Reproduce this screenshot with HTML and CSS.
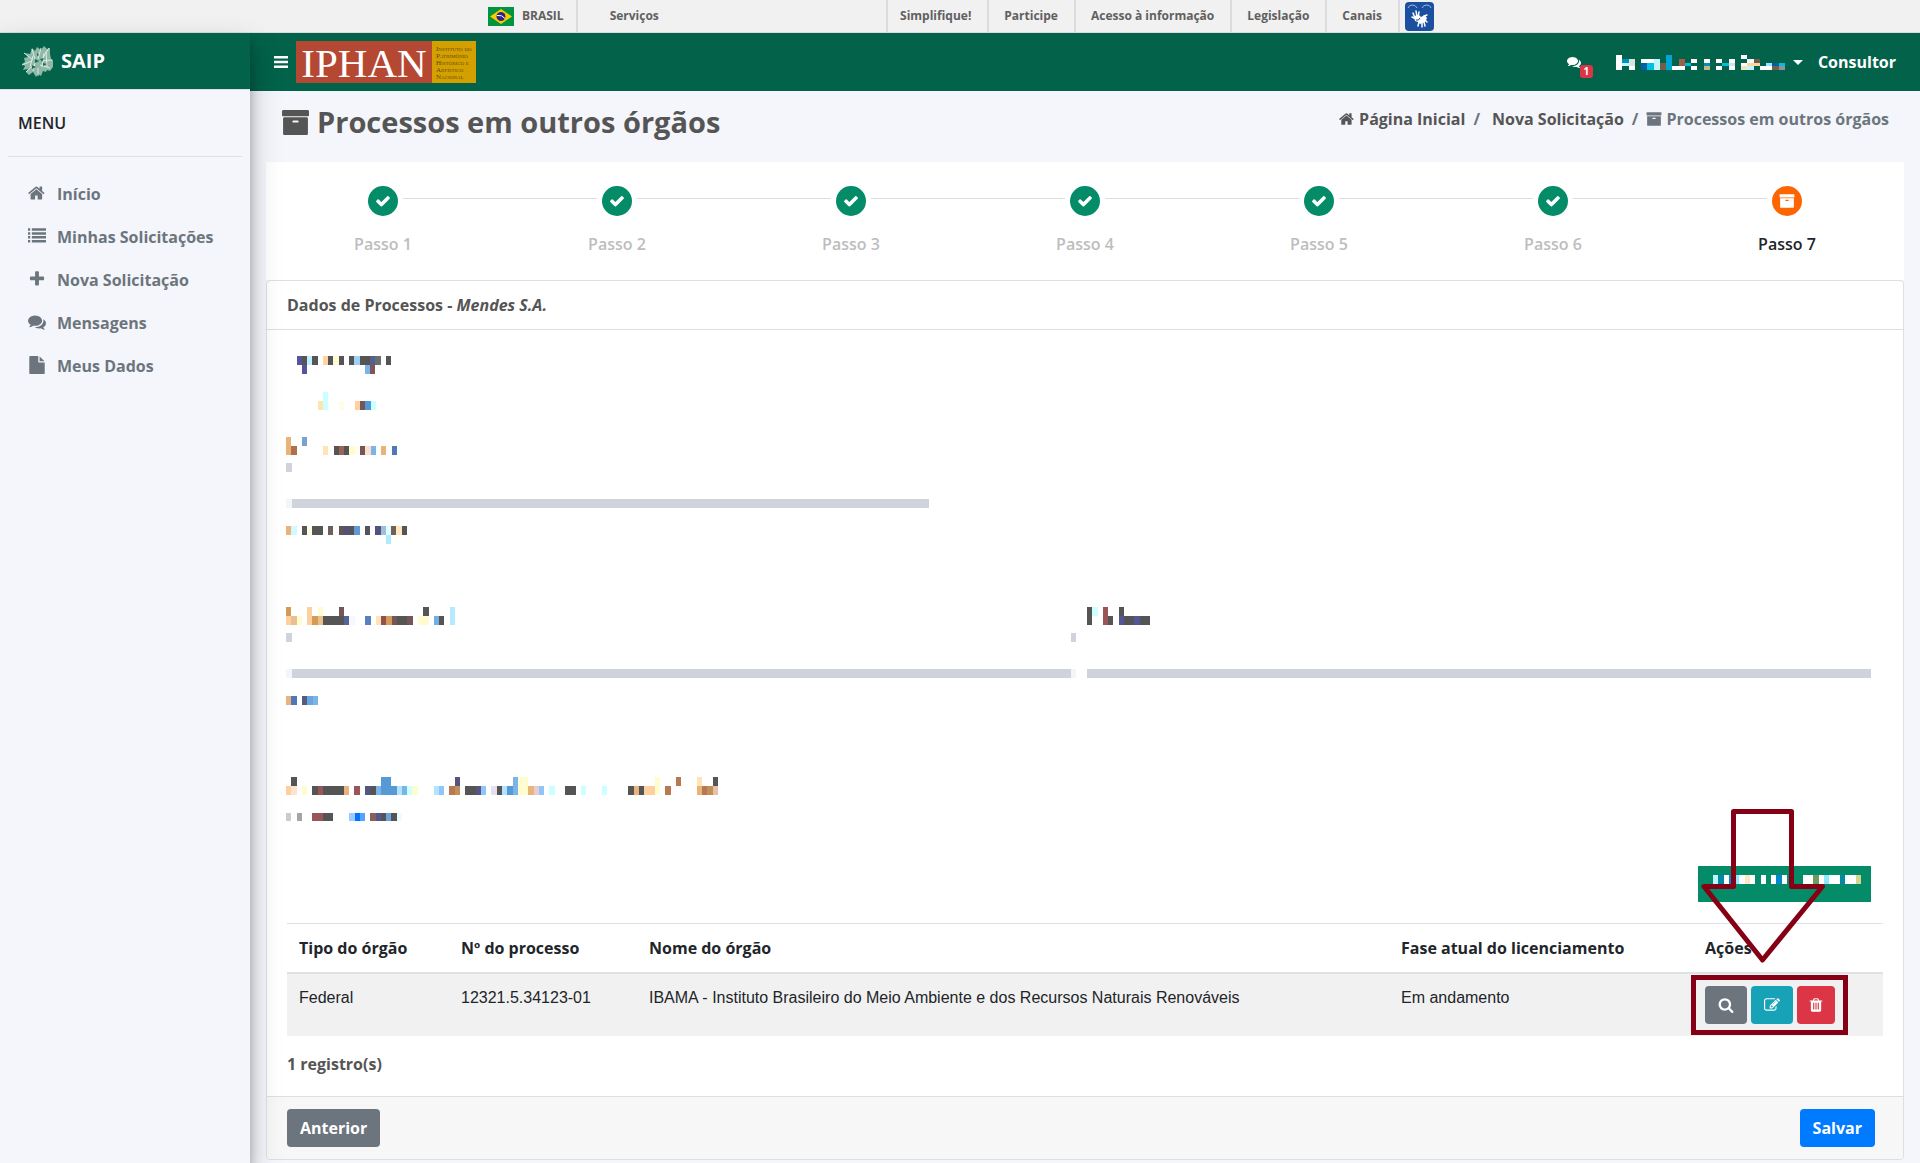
FILE: index.html
```html
<!DOCTYPE html>
<html lang="pt-BR">
<head>
<meta charset="utf-8">
<meta name="viewport" content="width=device-width, initial-scale=1">
<title>SAIP - Processos em outros órgãos</title>
<link rel="stylesheet" href="styles.css">
</head>
<body>
<svg class="sprite" aria-hidden="true">
  <symbol id="home" viewBox="0 0 1792 1792"><path d="M1408 992v480q0 26-19 45t-45 19h-384v-384h-256v384h-384q-26 0-45-19t-19-45v-480q0-1 .5-3t.5-3l575-474 575 474q1 2 1 6zm223-69l-62 74q-8 9-21 11h-3q-13 0-21-7l-692-577-692 577q-12 8-24 7-13-2-21-11l-62-74q-8-10-7-23.500t11-21.500l719-599q32-26 76-26t76 26l244 204v-195q0-14 9-23t23-9h192q14 0 23 9t9 23v408l219 182q10 8 11 21.500t-7 23.500z"/></symbol>
  <symbol id="list" viewBox="0 0 1792 1792"><path d="M0 130h220v250H0zM384 130h1408v250H384zM0 514h220v250H0zM384 514h1408v250H384zM0 898h220v250H0zM384 898h1408v250H384zM0 1282h220v250H0zM384 1282h1408v250H384z"/></symbol>
  <symbol id="plus" viewBox="0 0 1792 1792"><path d="M1600 736v192q0 40-28 68t-68 28h-416v416q0 40-28 68t-68 28h-192q-40 0-68-28t-28-68v-416h-416q-40 0-68-28t-28-68v-192q0-40 28-68t68-28h416v-416q0-40 28-68t68-28h192q40 0 68 28t28 68v416h416q40 0 68 28t28 68z"/></symbol>
  <symbol id="comments" viewBox="0 0 1792 1792"><path d="M1408 768q0 139-94 257t-256.500 186.500-353.500 68.500q-86 0-176-16-124 88-278 128-36 9-86 16h-3q-11 0-20.500-8t-11.500-21q-1-3-1-6.500t.5-6.500 2-6l2.500-5 3.500-5.500 4-5 4.500-5 4-4.500q5-6 23-25t26-29.500 22.500-29 25-38.500 20.500-44q-124-72-195-177t-71-224q0-139 94-257t256.500-186.500 353.500-68.500 353.500 68.500 256.500 186.500 94 257zm384 256q0 120-71 224.500t-195 176.500q10 24 20.500 44t25 38.500 22.500 29 26 29.500 23 25q1 1 4 4.500t4.500 5 4 5 3.500 5.500l2.500 5 2 6 .5 6.500-1 6.500q-3 14-13 22t-22 7q-50-7-86-16-154-40-278-128-90 16-176 16-271 0-472-132 58 4 88 4 161 0 309-45t264-129q125-92 192-212t67-254q0-77-23-152 129 71 204 178t75 230z"/></symbol>
  <symbol id="file" viewBox="0 0 1792 1792"><path d="M1152 512v-472q22 14 36 28l408 408q14 14 28 36h-472zm-128 32q0 40 28 68t68 28h544v1056q0 40-28 68t-68 28h-1344q-40 0-68-28t-28-68v-1600q0-40 28-68t68-28h800v544z"/></symbol>
  <symbol id="archive" viewBox="0 0 1792 1792"><path d="M1088 832q0-26-19-45t-45-19h-256q-26 0-45 19t-19 45 19 45 45 19h256q26 0 45-19t19-45zm576-192v960q0 26-19 45t-45 19h-1408q-26 0-45-19t-19-45v-960q0-26 19-45t45-19h1408q26 0 45 19t19 45zm64-448v256q0 26-19 45t-45 19h-1536q-26 0-45-19t-19-45v-256q0-26 19-45t45-19h1536q26 0 45 19t19 45z"/></symbol>
  <symbol id="check" viewBox="0 0 1792 1792"><path d="M1671 566q0 40-28 68l-724 724-136 136q-28 28-68 28t-68-28l-136-136-362-362q-28-28-28-68t28-68l136-136q28-28 68-28t68 28l294 295 656-657q28-28 68-28t68 28l136 136q28 28 28 68z"/></symbol>
  <symbol id="search" viewBox="0 0 1792 1792"><path d="M1216 832q0-185-131.500-316.500t-316.500-131.500-316.500 131.500-131.500 316.500 131.500 316.500 316.500 131.500 316.500-131.500 131.500-316.500zm512 832q0 52-38 90t-90 38q-54 0-90-38l-343-342q-179 124-399 124-143 0-273.500-55.500t-225-150-150-225-55.500-273.500 55.500-273.500 150-225 225-150 273.500-55.500 273.500 55.500 225 150 150 225 55.500 273.500q0 220-124 399l343 343q37 37 37 90z"/></symbol>
  <symbol id="edit" viewBox="0 0 1792 1792"><path d="M888 1184l116-116-152-152-116 116v56h96v96h56zm440-720q-16-16-33 1l-350 350q-17 17-1 33t33-1l350-350q17-17 1-33zm80 594v190q0 119-84.500 203.500t-203.500 84.500h-832q-119 0-203.500-84.500t-84.500-203.500v-832q0-119 84.500-203.500t203.500-84.500h832q63 0 117 25 15 7 18 23 3 17-9 29l-49 49q-14 14-32 8-23-6-45-6h-832q-66 0-113 47t-47 113v832q0 66 47 113t113 47h832q66 0 113-47t47-113v-126q0-13 9-22l64-64q15-15 35-7t20 29zm-96-738l288 288-672 672h-288v-288zm444 132l-92 92-288-288 92-92q28-28 68-28t68 28l152 152q28 28 28 68t-28 68z"/></symbol>
  <symbol id="trash" viewBox="0 0 1792 1792"><path d="M704 1376v-704q0-14-9-23t-23-9h-64q-14 0-23 9t-9 23v704q0 14 9 23t23 9h64q14 0 23-9t9-23zm256 0v-704q0-14-9-23t-23-9h-64q-14 0-23 9t-9 23v704q0 14 9 23t23 9h64q14 0 23-9t9-23zm256 0v-704q0-14-9-23t-23-9h-64q-14 0-23 9t-9 23v704q0 14 9 23t23 9h64q14 0 23-9t9-23zm-544-992h448l-48-117q-7-9-17-11h-317q-10 2-17 11zm928 32v64q0 14-9 23t-23 9h-96v948q0 83-47 143.500t-113 60.500h-832q-66 0-113-58.500t-47-141.500v-952h-96q-14 0-23-9t-9-23v-64q0-14 9-23t23-9h309l70-167q15-37 54-63t79-26h320q40 0 79 26t54 63l70 167h309q14 0 23 9t9 23z"/></symbol>
</svg>

<nav class="govbar" aria-label="Barra Brasil">
  <div class="govbar-inner">
    <a class="gov-brasil" href="#">
      <svg width="26" height="19" viewBox="0 0 26 19" aria-hidden="true"><path fill="#009440" d="M0 0h26v19H0z"/><path fill="#ffcb00" d="M13 2l11 7.500L13 17 2 9.500z"/><circle cx="13" cy="9.500" r="4.500" fill="#302681"/><path d="M9 8.500q5-1 8 3" stroke="#fff" fill="none"/></svg>
      BRASIL</a>
    <a class="gov-servicos" href="#">Serviços</a>
    <div class="gov-links">
      <a href="#">Simplifique!</a><a href="#">Participe</a><a href="#">Acesso à informação</a><a href="#">Legislação</a><a href="#">Canais</a>
    </div>
    <a class="vlibras" href="#" aria-label="VLibras">
      <svg width="29" height="29" viewBox="0 0 29 29"><rect width="29" height="29" rx="4" fill="#1b4f9f"/><path d="M3 6q1-3 4-3 4 0 5 3M26 6q-1-3-4-3-4 0-5 3" stroke="#9db9de" fill="none"/><path d="M8 11l2 5M11 9l1 6M14 10l-1 5M7 15l4 2M14 20l-1 4M17 21l0 4M19 20l1 4M20 18l2 2M19 14l3-1" stroke="#fff" stroke-width="1.500" stroke-linecap="round" fill="none"/><path fill="#fff" d="M9 14l5-1 2 2 4-2 2 3-2 4-5 2-2-2-3-1z"/><path d="M11 18q3 1 4-2" stroke="#1b4f9f" fill="none"/></svg>
    </a>
  </div>
</nav>

<div class="app">
  <aside class="sidebar">
    <a class="brand" href="#">
      <svg width="32" height="33" viewBox="0 0 32 33" aria-hidden="true"><path fill="#8fb8a9" d="M11 3l3 3 2-4 4 3 3-4 3 3 3-1v6l1 5 2 1v7l-3 4-3-1-1 2-3-1-2 5-3-2-2 3-3-5-4 3-3-3 2-3-5 1 2-4-3-2 3-2-1-4 4-1-3-4 5 1 1-3z"/><path d="M3 8l9 7M1 20l10-4M5 27l9-8M11 4l3 10M20 3l-3 11M28 3l-8 13M31 15l-11 1M29 23l-10-3M17 31l0-8M12 11l-3 11M23 8l-2 14M14 18l-2 8M25 6l1 16" stroke="#dcebe4" fill="none"/><path d="M14 14l4 2-4 2zM19 14l4-1-2 4zM11 20l4 2-4 2zM22 18l4 1-4 2zM16 8l2 2-2 1z" fill="#1d6b52"/></svg>
      SAIP</a>
    <h2 class="menu-title">MENU</h2>
    <ul class="menu">
      <li><a href="#"><svg class="icon"><use href="#home"/></svg>Início</a></li>
      <li><a href="#"><svg class="icon"><use href="#list"/></svg>Minhas Solicitações</a></li>
      <li><a href="#"><svg class="icon"><use href="#plus"/></svg>Nova Solicitação</a></li>
      <li><a href="#"><svg class="icon"><use href="#comments"/></svg>Mensagens</a></li>
      <li><a href="#"><svg class="icon"><use href="#file"/></svg>Meus Dados</a></li>
    </ul>
  </aside>

  <div class="page">
    <header class="topbar">
      <button class="toggle" type="button" aria-label="Menu"><svg width="14" height="12" viewBox="0 0 14 12"><path fill="#fff" d="M0 0h14v2.500H0zM0 4.700h14v2.500H0zM0 9.500h14V12H0z"/></svg></button>
      <a class="iphan" href="#">
        <span class="iphan-name">IPHAN</span>
        <span class="iphan-full">Instituto do<br>Patrimônio<br>Histórico e<br>Artístico<br>Nacional</span>
      </a>
      <div class="user-area">
        <a class="messages" href="#" aria-label="Mensagens"><svg class="icon"><use href="#comments"/></svg><span class="badge">1</span></a>
        <button class="user" type="button" aria-label="Usuário">
          <svg width="169" height="15" viewBox="0 0 27 4" preserveAspectRatio="none" class="mask" aria-hidden="true">
            <path stroke="#fff" d="M0 .5h1M0 1.500h1M0 2.500h1M0 3.500h1M2 3.500h1M4 1.500h2M12 1.500h1M9 3.500h2M12 3.500h1M14 1.500h1M16 1.500h1M16 3.500h1M18 1.500h1M18 3.500h1M20 .5h1M20 2.500h1M21 1.500h1M23 3.500h2"/>
            <path stroke="#0090c0" d="M1 1.500h1M14 2.500h1"/><path stroke="#c0f5ff" d="M1 2.500h1M6 1.500h1M6 2.500h1M6 3.500h1M21 3.500h1"/><path stroke="#d8e4e0" d="M2 1.500h1M2 2.500h1M18 2.500h1"/>
            <path stroke="#0060a0" d="M4 2.500h1M4 3.500h1M25 2.500h1"/><path stroke="#00c0e0" d="M5 2.500h1M5 3.500h1M11 2.500h1M17 2.500h1M26 2.500h1"/><path stroke="#70604a" d="M7 2.500h1M7 3.500h1M22 1.500h1M25 3.500h1"/>
            <path stroke="#00a5d0" d="M8 .5h1M8 1.500h1M8 2.500h1M8 3.500h1"/><path stroke="#a06048" d="M10 1.500h1M10 2.500h1"/><path stroke="#c5b880" d="M14 3.500h1"/><path stroke="#ffd8a0" d="M21 2.500h2"/><path stroke="#f0e5c0" d="M20 3.500h1"/><path stroke="#90e8ff" d="M24 2.500h1"/><path stroke="#9090a0" d="M26 3.500h1"/>
          </svg>
          <span class="caret"></span>
        </button>
        <a class="role" href="#">Consultor</a>
      </div>
    </header>

    <main class="content">
      <div class="heading">
        <h1><svg class="icon icon-title"><use href="#archive"/></svg>Processos em outros órgãos</h1>
        <ol class="breadcrumb">
          <li><a href="#"><svg class="icon"><use href="#home"/></svg>Página Inicial</a></li>
          <li class="mid"><a href="#">Nova Solicitação</a></li>
          <li class="current"><svg class="icon"><use href="#archive"/></svg>Processos em outros órgãos</li>
        </ol>
      </div>

      <ol class="steps">
        <li><span class="dot"><svg class="icon"><use href="#check"/></svg></span>Passo 1</li>
        <li><span class="dot"><svg class="icon"><use href="#check"/></svg></span>Passo 2</li>
        <li><span class="dot"><svg class="icon"><use href="#check"/></svg></span>Passo 3</li>
        <li><span class="dot"><svg class="icon"><use href="#check"/></svg></span>Passo 4</li>
        <li><span class="dot"><svg class="icon"><use href="#check"/></svg></span>Passo 5</li>
        <li><span class="dot"><svg class="icon"><use href="#check"/></svg></span>Passo 6</li>
        <li class="active"><span class="dot"><svg class="icon"><use href="#archive"/></svg></span>Passo 7</li>
      </ol>

      <section class="card">
        <h2 class="card-header">Dados de Processos - <em>Mendes S.A.</em></h2>
        <div class="card-body">
          <div class="fields">
            <svg class="mask" width="105" height="18" viewBox="0 0 20 2" preserveAspectRatio="none" aria-hidden="true">
              <path stroke="#55559a" d="M2 .5h1M3 1.500h1"/><path stroke="#555" d="M3 .5h1M5 .5h1M8 .5h1M10 .5h1M12 .5h1M14 .5h2M19 .5h1"/><path stroke="#bff0ff" d="M4 .5h1"/><path stroke="#ffd49f" d="M7 .5h1"/><path stroke="#fffbd5" d="M9 .5h1"/><path stroke="#9fd0f5" d="M13 .5h1"/><path stroke="#556090" d="M16 .5h1"/><path stroke="#6a706d" d="M17 .5h1"/><path stroke="#7ab5ea" d="M15 1.500h1"/><path stroke="#805558" d="M16 1.500h1"/>
            </svg>
            <svg class="mask gap-s" width="90" height="18" viewBox="0 0 17 2" preserveAspectRatio="none" aria-hidden="true">
              <path stroke="#cff" d="M7 .5h1M7 1.500h1M16 1.500h1"/><path stroke="#ffe4b0" d="M6 1.500h1"/><path stroke="#fffde5" d="M10 1.500h1"/><path stroke="#ffd09f" d="M13 1.500h1"/><path stroke="#755558" d="M14 1.500h1"/><path stroke="#4f98d5" d="M15 1.500h1"/>
            </svg>
            <svg class="mask gap-m" width="111" height="18" viewBox="0 0 21 2" preserveAspectRatio="none" aria-hidden="true">
              <path stroke="#e8b47a" d="M0 .5h1M0 1.500h1M18 1.500h1"/><path stroke="#78a2d0" d="M3 .5h1"/><path stroke="#b07050" d="M1 1.500h1"/><path stroke="#ffe4b5" d="M7 1.500h1"/><path stroke="#555" d="M9 1.500h1M11 1.500h1"/><path stroke="#9a6458" d="M10 1.500h1"/><path stroke="#fffdd0" d="M12 1.500h1"/><path stroke="#fffff0" d="M13 1.500h1"/><path stroke="#755558" d="M14 1.500h1"/><path stroke="#fbe0d0" d="M15 1.500h1"/><path stroke="#7ab5ea" d="M16 1.500h1"/><path stroke="#5078b8" d="M20 1.500h1"/>
            </svg>
            <div class="line short"></div>
            <svg class="mask gap-s" width="121" height="18" viewBox="0 0 23 2" preserveAspectRatio="none" aria-hidden="true">
              <path stroke="#e8b47a" d="M0 .5h1"/><path stroke="#d0faff" d="M1 .5h1"/><path stroke="#555" d="M3 .5h1M5 .5h2M12 .5h1M15 .5h1M22 .5h1"/><path stroke="#fffde5" d="M4 .5h1"/><path stroke="#70605a" d="M8 .5h1M20 .5h1"/><path stroke="#645453" d="M10 .5h1"/><path stroke="#555080" d="M11 .5h1M17 .5h1"/><path stroke="#6098d8" d="M13 .5h1"/><path stroke="#9fbfd5" d="M18 .5h1"/><path stroke="#e0fdff" d="M19 .5h1"/><path stroke="#ffe8bf" d="M21 .5h1"/><path stroke="#b0eaff" d="M19 1.500h1"/>
            </svg>
            <div class="pair">
              <div>
                <svg class="mask" width="169" height="18" viewBox="0 0 32 2" preserveAspectRatio="none" aria-hidden="true">
                  <path stroke="#d59a55" d="M0 .5h1M5 1.500h1M19 1.500h1"/><path stroke="#ffd09f" d="M0 1.500h1M4 .5h1M4 1.500h1"/><path stroke="#fffdd0" d="M6 .5h1M2 1.500h1M25 1.500h2"/><path stroke="#e8c090" d="M1 1.500h1M6 1.500h1"/><path stroke="#755558" d="M10 .5h1M20 1.500h1M23 1.500h1"/><path stroke="#555" d="M26 .5h1M7 1.500h4M21 1.500h2M29 1.500h1"/><path stroke="#b5eaff" d="M31 .5h1M31 1.500h1"/><path stroke="#556498" d="M11 1.500h1"/><path stroke="#f5f8ff" d="M12 1.500h1"/><path stroke="#5a7fbf" d="M15 1.500h1"/><path stroke="#ffe4b5" d="M17 1.500h1"/><path stroke="#905050" d="M18 1.500h1"/><path stroke="#70b0e5" d="M28 1.500h1"/>
                </svg>
                <div class="line closed"></div>
              </div>
              <div>
                <svg class="mask" width="63" height="18" viewBox="0 0 12 2" preserveAspectRatio="none" aria-hidden="true">
                  <path stroke="#555" d="M0 .5h1M0 1.500h1M6 .5h1M4 1.500h1M7 1.500h2M10 1.500h2"/><path stroke="#cff" d="M1 .5h1"/><path stroke="#9a5555" d="M3 .5h1M3 1.500h1"/><path stroke="#555598" d="M6 1.500h1M9 1.500h1"/>
                </svg>
                <div class="line open"></div>
              </div>
            </div>
            <svg class="mask gap-s" width="32" height="9" viewBox="0 0 6 1" preserveAspectRatio="none" aria-hidden="true">
              <path stroke="#e8b47a" d="M0 .5h1"/><path stroke="#5078b8" d="M1 .5h1"/><path stroke="#555a80" d="M3 .5h1"/><path stroke="#6ba5e0" d="M4 .5h1"/><path stroke="#7ab5ea" d="M5 .5h1"/>
            </svg>
            <svg class="mask gap-l" width="432" height="18" viewBox="0 0 82 2" preserveAspectRatio="none" aria-hidden="true">
              <path stroke="#555" d="M1 .5h1M81 .5h1M5 1.500h1M7 1.500h4M16 1.500h1M34 1.500h2M40 1.500h1M53 1.500h2M65 1.500h1M67 1.500h1"/><path stroke="#559ad5" d="M18 .5h2M18 1.500h3M42 1.500h1"/><path stroke="#555580" d="M32 .5h1M15 1.500h1M36 1.500h1"/><path stroke="#7ab5ea" d="M43 .5h1M17 1.500h1M22 1.500h1M43 1.500h1"/><path stroke="#fffdd0" d="M44 .5h2M70 .5h1M3 1.500h1M24 1.500h1M44 1.500h2M70 1.500h1"/><path stroke="#b87850" d="M74 .5h1M31 1.500h1M72 1.500h1M79 1.500h1"/><path stroke="#ffe4b5" d="M78 .5h1"/><path stroke="#ffd09f" d="M0 1.500h1M68 1.500h2"/><path stroke="#fbe4d0" d="M1 1.500h1"/><path stroke="#9a5558" d="M6 1.500h1M13 1.500h1"/><path stroke="#e8b47a" d="M11 1.500h1M46 1.500h1M66 1.500h1M78 1.500h1"/><path stroke="#b0e4ff" d="M21 1.500h1M28 1.500h1M41 1.500h1"/><path stroke="#cff" d="M23 1.500h1M50 1.500h1M56 1.500h1M60 1.500h1"/><path stroke="#90c5fa" d="M29 1.500h1M37 1.500h1M48 1.500h1"/><path stroke="#c09058" d="M32 1.500h1M80 1.500h1"/><path stroke="#e4e0f0" d="M39 1.500h1"/><path stroke="#e8ccd0" d="M47 1.500h1"/><path stroke="#e8c0a8" d="M81 1.500h1"/>
            </svg>
            <svg class="mask gap-s" width="116" height="8" viewBox="0 0 22 1" preserveAspectRatio="none" aria-hidden="true">
              <path stroke="#ccc" d="M0 .5h1"/><path stroke="#a5a5a5" d="M2 .5h1"/><path stroke="#9a5558" d="M5 .5h2"/><path stroke="#555" d="M7 .5h2M18 .5h1M20 .5h1"/><path stroke="#9fcbff" d="M12 .5h1"/><path stroke="#0075ff" d="M13 .5h1"/><path stroke="#55a2ff" d="M14 .5h1"/><path stroke="#8a5f58" d="M16 .5h1"/><path stroke="#55559a" d="M17 .5h1"/><path stroke="#68a5dd" d="M19 .5h1"/><path stroke="#effcff" d="M21 .5h1"/>
            </svg>
            <button class="add" type="button" aria-label="Adicionar">
              <svg class="mask" width="148" height="9" viewBox="0 0 28 1" preserveAspectRatio="none" aria-hidden="true">
                <path stroke="#fff" d="M2 .5h1M5 .5h1M7 .5h1M9 .5h1M11 .5h1M13 .5h1M17 .5h2M20 .5h1M22 .5h2M25 .5h2"/><path stroke="#bff5ff" d="M0 .5h1"/><path stroke="#0088a5" d="M1 .5h1M24 .5h1"/><path stroke="#0088c8" d="M3 .5h1M12 .5h1"/><path stroke="#90e8ff" d="M4 .5h1M21 .5h1"/><path stroke="#ffe8c0" d="M6 .5h1"/><path stroke="#709a60" d="M19 .5h1"/><path stroke="#d5d590" d="M27 .5h1"/>
              </svg>
            </button>
          </div>

          <table class="data">
            <colgroup><col class="c-type"><col class="c-number"><col><col class="c-phase"><col class="c-actions"></colgroup>
            <thead>
              <tr><th>Tipo do órgão</th><th>Nº do processo</th><th>Nome do órgão</th><th>Fase atual do licenciamento</th><th>Ações</th></tr>
            </thead>
            <tbody>
              <tr>
                <td>Federal</td><td>12321.5.34123-01</td><td>IBAMA - Instituto Brasileiro do Meio Ambiente e dos Recursos Naturais Renováveis</td><td>Em andamento</td>
                <td>
                  <div class="actions">
                    <button class="btn gray" type="button" aria-label="Visualizar"><svg class="icon"><use href="#search"/></svg></button>
                    <button class="btn teal" type="button" aria-label="Editar"><svg class="icon"><use href="#edit"/></svg></button>
                    <button class="btn red" type="button" aria-label="Excluir"><svg class="icon"><use href="#trash"/></svg></button>
                    <svg class="callout" width="157" height="229" viewBox="0 0 157 229" aria-hidden="true"><path fill="none" stroke="#850014" stroke-width="5" stroke-linejoin="round" d="M42.500 5.500h58v75h31L71.500 154 13 80.500h29.500z"/><path fill="none" stroke="#850014" stroke-width="5" d="M2.500 171.500h152v55H2.500z"/></svg>
                  </div>
                </td>
              </tr>
            </tbody>
          </table>
          <p class="count">1 registro(s)</p>
        </div>
        <footer class="card-footer">
          <button class="btn gray" type="button">Anterior</button>
          <button class="btn blue" type="button">Salvar</button>
        </footer>
      </section>
    </main>
  </div>
</div>
</body>
</html>
```
FILE: styles.css
```css
* { box-sizing: border-box; }

body {
  margin: 0;
  background: #f4f6fb;
  color: #555;
  font: 700 16px/24px "Open Sans", sans-serif;
}

a { color: inherit; text-decoration: none; }
button { font: inherit; color: inherit; border: 0; cursor: pointer; }
h1, h2, p, ul, ol { margin: 0; padding: 0; }
ul, ol { list-style: none; }

.sprite { display: none; }
.icon { width: 16px; height: 16px; fill: currentColor; flex: none; overflow: visible; }
.mask { display: block; shape-rendering: crispEdges; }

/* Government bar */
.govbar { background: #f1f1f1; border-bottom: 1px solid #dcdcdc; color: #606060; font-size: 12px; }
.govbar-inner { display: flex; align-items: stretch; max-width: 960px; height: 32px; margin: 0 auto; line-height: 32px; }
.gov-brasil { display: flex; align-items: center; gap: 8px; padding: 0 12px 0 8px; border-right: 2px solid #dcdcdc; }
.gov-servicos { padding-left: 32px; }
.gov-links { display: flex; margin-left: auto; }
.gov-links a { padding: 0 16px 0 15px; border-left: 2px solid #dcdcdc; }
.gov-links a:first-child { padding-left: 12px; }
.vlibras { display: flex; align-items: center; padding: 0 6px 0 5px; border-left: 2px solid #dcdcdc; }

.app { display: flex; min-height: calc(100vh - 33px); }

/* Sidebar */
.sidebar {
  position: relative;
  z-index: 2;
  flex: none;
  width: 250px;
  background: #f4f6fb;
  box-shadow: 0 14px 28px rgba(0, 0, 0, .25), 0 10px 10px rgba(0, 0, 0, .22);
}
.brand { display: flex; align-items: center; gap: 8px; height: 57px; padding-left: 21px; background: #02624a; border-bottom: 1px solid #dee2e6; color: #fff; font-size: 20px; }
.menu-title { margin: 0 8px; padding: 21px 10px; border-bottom: 1px solid #dee2e6; color: #212529; font-size: 16px; font-weight: 600; }
.menu { display: grid; gap: 3px; padding-top: 17px; }
.menu a { display: flex; align-items: center; gap: 10px; height: 40px; padding-left: 27px; color: #6c757d; }
.menu .icon { width: 20px; height: 18px; margin-bottom: 3px; }

/* Top bar */
.page { flex: 1; min-width: 0; }
.topbar { display: flex; align-items: center; height: 58px; padding: 0 24px; background: #02624a; color: #fff; }
.toggle { display: flex; padding: 0; background: none; }
.iphan { display: flex; width: 180px; height: 42px; margin-left: 8px; font-family: "Liberation Serif", serif; font-weight: 400; }
.iphan-name { width: 136px; background: #b54832; font-size: 41px; line-height: 44px; text-align: center; }
.iphan-full { flex: 1; padding: 5px 4px; background: #d4a000; color: #5f4a10; font-size: 7px; line-height: 7px; font-variant: small-caps; white-space: nowrap; }
.user-area { display: flex; align-items: center; margin-left: auto; }
.messages { position: relative; display: flex; margin-right: 35px; }
.messages .icon { width: 14px; height: 14px; }
.badge { position: absolute; left: 13px; top: 10px; width: 13px; height: 13px; border-radius: 3px; background: #dc3545; font-size: 10px; line-height: 13px; text-align: center; }
.user { display: flex; align-items: center; gap: 8px; padding: 0; background: none; }
.caret { border: 5px solid transparent; border-top-color: #fff; border-bottom: 0; }
.role { margin-left: 15px; }

/* Page heading */
.content { padding: 0 16px 3px; }
.heading { display: flex; justify-content: space-between; height: 71px; padding: 11px 15px 0; }
h1 { display: flex; align-items: center; gap: 7px; height: 40px; font-size: 29px; }
.icon-title { width: 29px; height: 29px; }
.breadcrumb { display: flex; height: 34px; align-items: center; }
.breadcrumb li, .breadcrumb a { display: flex; align-items: center; }
.breadcrumb .icon { margin-right: 4px; }
.breadcrumb li + li::before { content: "/"; padding: 0 8px; color: #6c757d; }
.breadcrumb .mid a { padding-left: 4px; }
.current { color: #6c757d; }

/* Wizard steps */
.steps { display: flex; padding: 24px 0; background: #fff; font-weight: 600; }
.steps li { position: relative; flex: 1; display: flex; flex-direction: column; align-items: center; gap: 16px; color: #bdbdbd; }
.steps li:not(:last-child)::after { content: ""; position: absolute; top: 12px; left: calc(50% + 20px); right: calc(-50% + 20px); border-top: 1px solid #dedede; }
.steps .active { color: #212529; }
.dot { display: flex; align-items: center; justify-content: center; width: 30px; height: 30px; border-radius: 50%; background: #048c68; color: #fff; }
.active .dot { background: #fd6500; }

/* Card */
.card { background: #fff; border: 1px solid #dfdfdf; border-radius: 4px; }
.card-header { padding: 12px 20px; border-bottom: 1px solid #dfdfdf; font-size: 16px; }
.card-body { padding: 26px 20px 20px; }
.fields { display: flex; flex-direction: column; align-items: flex-start; margin-left: -1px; padding-right: 12px; }
.gap-s { margin-top: 18px; }
.gap-m { margin-top: 27px; }
.gap-l { margin-top: 72px; }
.line {
  --bar: linear-gradient(#cfd4dc, #cfd4dc);
  --tip: linear-gradient(#f3f5f8, #f3f5f8);
  height: 45px;
  margin-top: 8px;
  background-repeat: no-repeat;
}
.short {
  width: 643px;
  max-width: 100%;
  background-image: var(--bar), var(--tip), var(--bar);
  background-position: left top, left bottom, left bottom;
  background-size: 6px 9px, 6px 9px, 100% 9px;
}
.closed {
  background-image: var(--bar), var(--bar), var(--tip), var(--tip), var(--bar);
  background-position: left top, right top, left bottom, right bottom, left bottom;
  background-size: 6px 9px, 5px 9px, 6px 9px, 5px 9px, 100% 9px;
}
.open { background-image: var(--bar); background-position: left bottom; background-size: 100% 9px; }
.pair { display: grid; grid-template-columns: 790fr 784fr; gap: 11px; width: 100%; margin-top: 63px; }
.add { align-self: flex-end; margin-top: 45px; height: 36px; padding: 0 10px 9px 15px; background: #048c68; }

/* Process table */
.data { width: 100%; margin-top: 21px; table-layout: fixed; border-collapse: collapse; border-top: 1px solid #dee2e6; color: #212529; }
.c-type { width: 162px; }
.c-number { width: 188px; }
.c-phase { width: 304px; }
.c-actions { width: 190px; }
.data th, .data td { padding: 12px; text-align: left; vertical-align: top; }
.data th { border-bottom: 2px solid #dee2e6; }
.data td { background: #f1f1f1; font-family: "Liberation Sans", sans-serif; font-weight: 400; }
.actions { position: relative; display: flex; gap: 4px; }
.callout { position: absolute; left: -14px; top: -180px; pointer-events: none; }
.btn { display: flex; align-items: center; justify-content: center; height: 38px; padding: 0 13px; border-radius: 4px; color: #fff; }
.gray { background: #6c757d; }
.teal { background: #17a2b8; }
.red { background: #dc3545; padding: 0 11px; }
.blue { background: #007bff; }
.count { margin-top: 16px; }

.card-footer { display: flex; justify-content: space-between; padding: 12px 28px 12px 20px; background: #f7f7f7; border-top: 1px solid #dfdfdf; border-radius: 0 0 4px 4px; }
```
